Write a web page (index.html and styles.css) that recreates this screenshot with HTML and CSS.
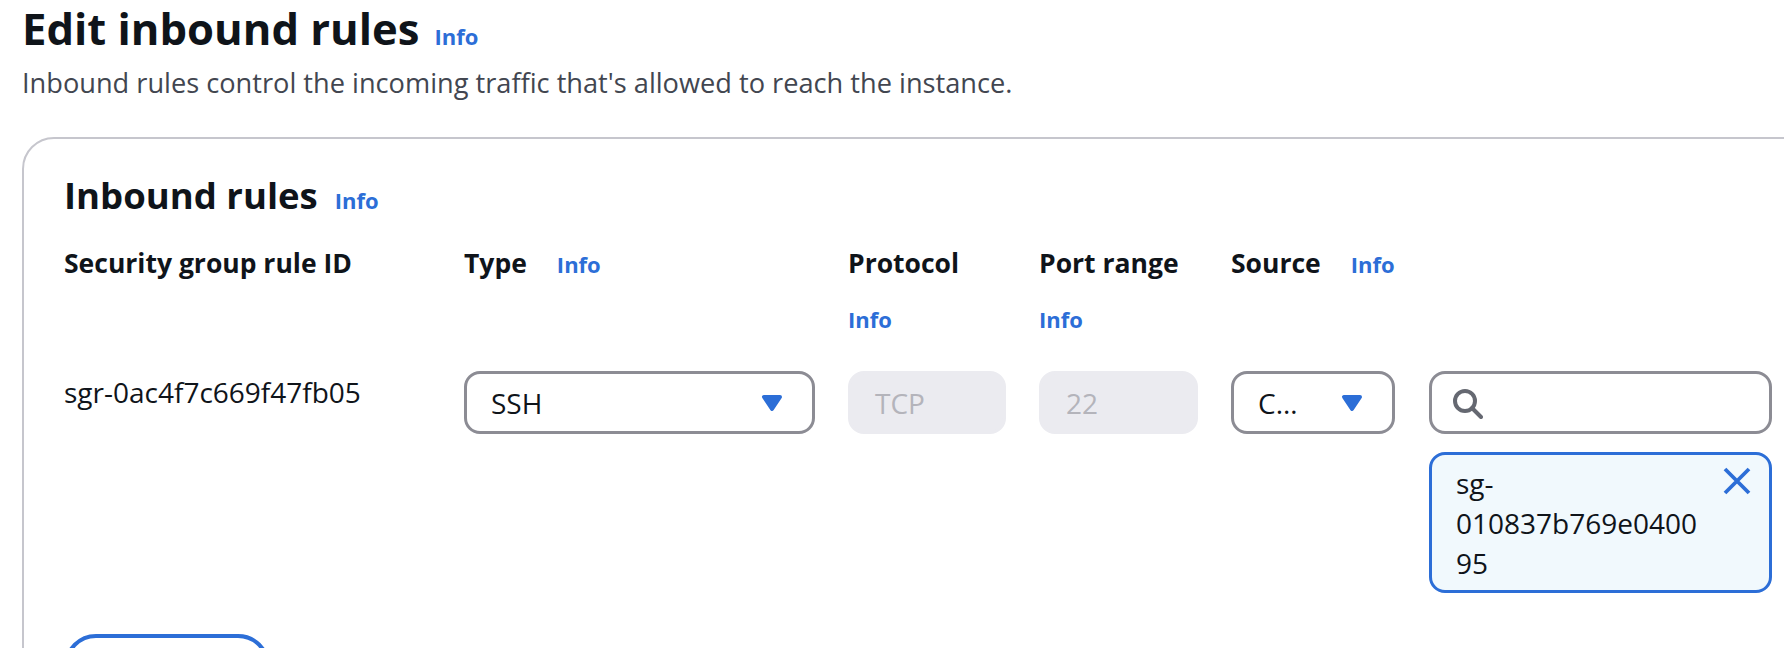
FILE: index.html
```html
<!DOCTYPE html>
<html lang="en">
<head>
<meta charset="utf-8">
<title>Edit inbound rules</title>
<link rel="stylesheet" href="styles.css">
</head>
<body>
<main class="page">
  <header class="page-header">
    <h1 class="title">Edit inbound rules<a class="info info-title" href="#">Info</a></h1>
    <p class="desc">Inbound rules control the incoming traffic that's allowed to reach the instance.</p>
  </header>

  <section class="card">
    <h2 class="card-title">Inbound rules<a class="info info-title2" href="#">Info</a></h2>

    <div class="rules">
      <div class="label-cell"><span class="label">Security group rule ID</span></div>
      <div class="label-cell"><span class="label">Type</span><a class="info" href="#">Info</a></div>
      <div class="label-cell"><span class="label">Protocol</span><a class="info" href="#">Info</a></div>
      <div class="label-cell"><span class="label">Port range</span><a class="info" href="#">Info</a></div>
      <div class="label-cell"><span class="label">Source</span><a class="info" href="#">Info</a></div>

      <div class="rule-id">sgr-0ac4f7c669f47fb05</div>

      <button class="select" type="button">
        <span class="select-text">SSH</span>
        <svg class="caret" viewBox="0 0 16 16" width="32" height="32" aria-hidden="true"><path d="M4 5h8l-4 6-4-6z"/></svg>
      </button>

      <div class="input disabled">TCP</div>
      <div class="input disabled">22</div>

      <div class="source">
        <button class="select select-source" type="button">
          <span class="select-text">Custom</span>
          <svg class="caret" viewBox="0 0 16 16" width="32" height="32" aria-hidden="true"><path d="M4 5h8l-4 6-4-6z"/></svg>
        </button>
        <div class="source-search">
          <div class="input search">
            <svg class="search-icon" viewBox="0 0 16 16" width="32" height="32" aria-hidden="true"><circle cx="7" cy="7" r="5"/><path d="m15 15-4.5-4.5"/></svg>
          </div>
          <div class="token">
            <span class="token-text">sg-010837b769e040095</span>
            <button class="dismiss" type="button" aria-label="Remove">
              <svg viewBox="0 0 16 16" width="32" height="32" aria-hidden="true"><path d="m2 2 12 12M14 2 2 14"/></svg>
            </button>
          </div>
        </div>
      </div>
    </div>

    <button class="btn" type="button">Add rule</button>
  </section>
</main>
</body>
</html>
```

FILE: styles.css
```css
html, body {
  margin: 0;
  padding: 0;
  overflow: hidden;
  background: #ffffff;
}

body {
  font-family: "Open Sans", "Noto Sans", Arial, sans-serif;
  color: #0f141a;
}

.page {
  width: 1900px;
  padding-left: 22px;
}

.title {
  margin: 0;
  font-size: 43.6px;
  line-height: 56px;
  font-weight: 700;
  color: #0f141a;
}

.info {
  color: #2c6ed7;
  text-decoration: none;
  font-size: 22px;
  font-weight: 700;
  line-height: 40px;
}

.info-title {
  margin-left: 15px;
}

.info-title2 {
  margin-left: 17px;
}

.desc {
  margin: 7px 0 0;
  font-size: 27.2px;
  line-height: 40px;
  color: #424650;
}

.card {
  margin-top: 34px;
  border: 2px solid #c6c6cd;
  border-radius: 32px;
  padding: 32px 40px 40px 40px;
}

.card-title {
  margin: 0;
  font-size: 36.5px;
  line-height: 48px;
  font-weight: 700;
}

.rules {
  margin-top: 23px;
  display: grid;
  grid-template-columns: 367px 351px 158px 159px 541px;
  column-gap: 33px;
  row-gap: 32px;
  align-items: start;
}

.label-cell {
  display: flex;
  flex-wrap: wrap;
  align-items: baseline;
  column-gap: 30px;
  row-gap: 16px;
}

.label {
  font-size: 26.5px;
  line-height: 40px;
  font-weight: 700;
}

.rule-id {
  font-size: 28px;
  line-height: 40px;
  padding-top: 1px;
}

.select {
  box-sizing: border-box;
  width: 100%;
  height: 63px;
  margin: 0;
  padding: 0 24px;
  border: 3px solid #8c8c94;
  border-radius: 16px;
  background: #ffffff;
  display: flex;
  align-items: center;
  gap: 28px;
  font-family: inherit;
  font-size: 28px;
  color: #0f141a;
  text-align: left;
  cursor: pointer;
}

.select-text {
  flex: 1;
  min-width: 0;
  white-space: nowrap;
  overflow: hidden;
  text-overflow: ellipsis;
}

.caret {
  flex: none;
  display: block;
}

.caret path {
  fill: #2c6ed7;
  stroke: #2c6ed7;
  stroke-width: 2;
  stroke-linejoin: round;
}

.input {
  box-sizing: border-box;
  height: 63px;
  padding: 0 24px;
  border: 3px solid #8c8c94;
  border-radius: 16px;
  display: flex;
  align-items: center;
  font-size: 28px;
}

.input.disabled {
  background: #ebebf0;
  border-color: #ebebf0;
  color: #b4b4bb;
}

.source {
  display: flex;
  align-items: flex-start;
  gap: 34px;
}

.select-source {
  width: 164px;
  flex: none;
}

.source-search {
  flex: 1;
  min-width: 0;
}

.search {
  padding-left: 19px;
}

.search-icon {
  display: block;
  fill: none;
  stroke: #656871;
  stroke-width: 2;
  stroke-linecap: round;
}

.token {
  margin-top: 18px;
  box-sizing: border-box;
  border: 3px solid #2c6ed7;
  border-radius: 16px;
  background: #f1f9fd;
  display: flex;
  align-items: flex-start;
  gap: 12px;
  padding: 8px 16px 7px 24px;
}

.token-text {
  flex: 1;
  min-width: 0;
  font-size: 28px;
  line-height: 40px;
  overflow-wrap: break-word;
}

.dismiss {
  flex: none;
  margin: 2px 0 0;
  padding: 0;
  border: 0;
  background: transparent;
  width: 32px;
  height: 32px;
}

.dismiss svg {
  display: block;
  fill: none;
  stroke: #2c6ed7;
  stroke-width: 1.9;
}

.btn {
  margin-top: 41px;
  height: 64px;
  padding: 0 40px;
  border: 4px solid #2c6ed7;
  border-radius: 40px;
  background: #ffffff;
  color: #2c6ed7;
  font-family: inherit;
  font-size: 28px;
  font-weight: 700;
}
```
